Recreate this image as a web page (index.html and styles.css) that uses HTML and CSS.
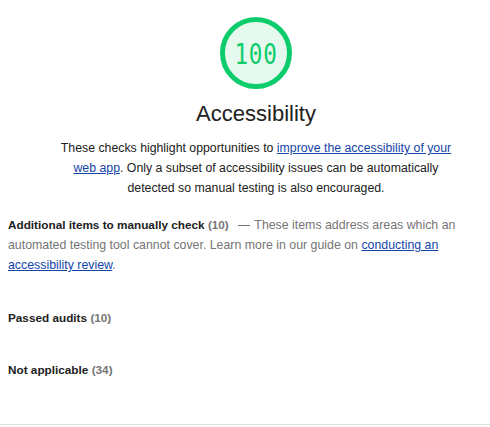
FILE: index.html
```html
<!DOCTYPE html>
<html>
<head>
<meta charset="utf-8">
<link rel="stylesheet" href="styles.css">
</head>
<body>
<div class="report">
  <header class="cat-header">
    <div class="gauge">
      <svg class="gauge-svg" width="72" height="72" viewBox="0 0 72 72">
        <circle cx="36" cy="36" r="33.5" fill="#e6f9ee" stroke="#0ccc6b" stroke-width="5"/>
      </svg>
      <span class="gauge-pct">100</span>
    </div>
    <h1 class="cat-title">Accessibility</h1>
    <p class="cat-desc">These checks highlight opportunities to <a href="#">improve the accessibility of your web app</a>. Only a subset of accessibility issues can be automatically detected so manual testing is also encouraged.</p>
  </header>
  <section class="group group-manual">
    <p class="group-text"><span class="group-title">Additional items to manually check</span> <span class="group-count">(10)</span><span class="group-desc"><span class="dash">—</span> These items address areas which an automated testing tool cannot cover. Learn more in our guide on <a href="#">conducting an accessibility review</a>.</span></p>
  </section>
  <section class="group group-passed">
    <p class="group-text"><span class="group-title">Passed audits</span> <span class="group-count">(10)</span></p>
  </section>
  <section class="group group-na">
    <p class="group-text"><span class="group-title">Not applicable</span> <span class="group-count">(34)</span></p>
  </section>
  <div class="divider"></div>
</div>
</body>
</html>
```

FILE: styles.css
```css
html, body {
  margin: 0;
  padding: 0;
  background: #fff;
}
body {
  font-family: "Liberation Sans", Arial, sans-serif;
  font-size: 12px;
  line-height: 20px;
  color: #212121;
}
.report {
  width: 490px;
  display: flex;
  flex-direction: column;
}
.cat-header {
  display: flex;
  flex-direction: column;
  align-items: center;
  padding-top: 17px;
  padding-left: 22px;
}
.gauge {
  position: relative;
  width: 72px;
  height: 72px;
}
.gauge-svg {
  display: block;
}
.gauge-pct {
  position: absolute;
  inset: 0;
  display: flex;
  align-items: center;
  justify-content: center;
  padding-top: 3px;
  font-family: "DejaVu Sans Mono", monospace;
  font-size: 29px;
  line-height: 1;
  color: #0ccc6b;
  letter-spacing: 1px;
  transform: scaleX(0.78);
}
.cat-title {
  margin: 12px 0 0;
  font-size: 22px;
  font-weight: normal;
  line-height: 26px;
  color: #212121;
}
.cat-desc {
  margin: 11px 0 0;
  width: 400px;
  text-align: center;
  font-size: 12.3px;
}
a {
  color: #1445a8;
  text-decoration: underline;
}
.group {
  padding: 0 8px;
}
.group-text {
  margin: 0;
}
.group-manual {
  margin-top: 17px;
  padding-right: 22px;
}
.group-passed {
  margin-top: 33px;
}
.group-na {
  margin-top: 32px;
}
.group-title {
  font-weight: bold;
  font-size: 11.75px;
}
.group-count {
  font-weight: bold;
  font-size: 11.75px;
  color: #757575;
}
.group-desc {
  color: #757575;
  margin-left: 9px;
  font-size: 12.35px;
}
.dash {
  margin-right: 1px;
}
.divider {
  margin-top: 44px;
  height: 1px;
  background: #e0e0e0;
}
```
